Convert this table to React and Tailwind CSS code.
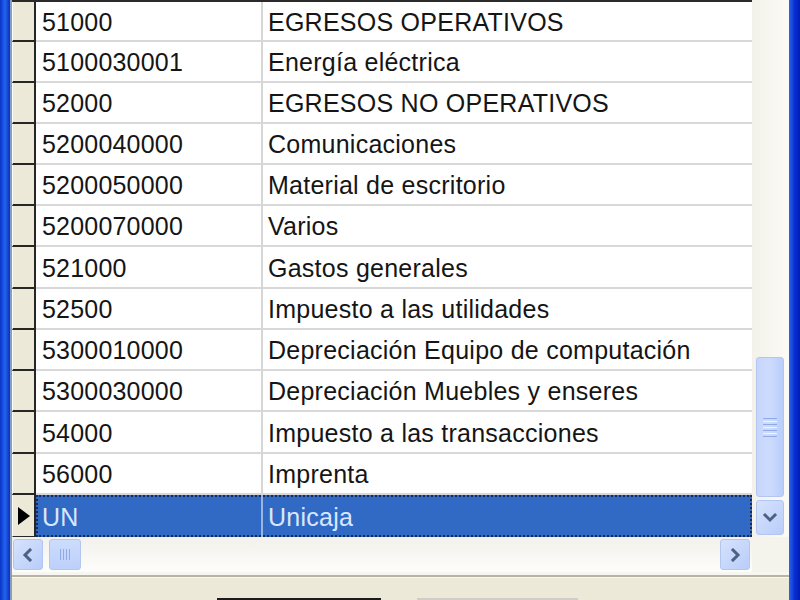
import React from "react";

const rows = [
  { code: "51000", name: "EGRESOS OPERATIVOS", h: "h-[40px]" },
  { code: "5100030001", name: "Energía eléctrica", h: "h-[41px]" },
  { code: "52000", name: "EGRESOS NO OPERATIVOS", h: "h-[41px]" },
  { code: "5200040000", name: "Comunicaciones", h: "h-[41px]" },
  { code: "5200050000", name: "Material de escritorio", h: "h-[41px]" },
  { code: "5200070000", name: "Varios", h: "h-[41px]" },
  { code: "521000", name: "Gastos generales", h: "h-[42px]" },
  { code: "52500", name: "Impuesto a las utilidades", h: "h-[41px]" },
  { code: "5300010000", name: "Depreciación Equipo de computación", h: "h-[41px]" },
  { code: "5300030000", name: "Depreciación Muebles y enseres", h: "h-[41px]" },
  { code: "54000", name: "Impuesto a las transacciones", h: "h-[42px]" },
  { code: "56000", name: "Imprenta", h: "h-[41px]" },
];

function Row({ code, name, h }) {
  return (
    <div className={`flex ${h}`}>
      <div className="w-[24px] bg-[#ece9d8] border-l border-l-white border-r-2 border-r-[#262626] border-b-2 border-b-[#262626]" />
      <div className="w-[227px] bg-white border-r-2 border-r-[#d6d6d6] border-b-2 border-b-[#d8d8d8] flex items-center pl-[6px] pt-[3px] text-[25px] tracking-[0.2px] text-[#151515]">
        {code}
      </div>
      <div className="flex-1 bg-white border-b-2 border-b-[#d8d8d8] flex items-center pl-[5px] pt-[3px] text-[25px] tracking-[0.25px] text-[#151515]">
        {name}
      </div>
    </div>
  );
}

function Chevron({ dir }) {
  const d =
    dir === "down"
      ? "M3 3 L8 8 L13 3"
      : dir === "left"
      ? "M9 2 L4 7 L9 12"
      : "M5 2 L10 7 L5 12";
  const vb = dir === "down" ? "0 0 16 11" : "0 0 14 14";
  const size = dir === "down" ? "w-[16px] h-[11px]" : "w-[14px] h-[14px]";
  return (
    <svg viewBox={vb} className={size}>
      <path d={d} fill="none" stroke="#4d6185" strokeWidth="3" strokeLinecap="square" />
    </svg>
  );
}

export default function App() {
  return (
    <div className="w-[800px] h-[600px] flex overflow-hidden bg-[#ece9d8] font-['Liberation_Sans',Arial,sans-serif]">
      {/* left window frame */}
      <div className="w-[10px] bg-gradient-to-r from-[#0a34c8] via-[#2563f0] to-[#0b2fb8]" />
      <div className="w-[2px] bg-[#8a9cc0]" />

      <div className="flex-1 flex flex-col">
        <div className="flex h-[537px]">
          {/* grid */}
          <div className="w-[740px] flex flex-col border-t-2 border-t-[#2a2a2a]">
            {rows.map((r) => (
              <Row key={r.code} {...r} />
            ))}
            {/* selected row */}
            <div className="flex h-[42px]">
              <div className="w-[24px] bg-[#ece9d8] border-l border-l-white border-r-2 border-r-[#262626] border-b border-b-[#262626] flex items-center justify-center">
                <svg viewBox="0 0 12 18" className="w-[12px] h-[18px]">
                  <path d="M0 0 L12 9 L0 18 Z" fill="#000" />
                </svg>
              </div>
              <div className="flex-1 flex bg-[#316ac5] outline-2 outline-dotted outline-[#1b2a55] -outline-offset-2">
                <div className="w-[227px] border-r-2 border-r-[#9bb5e3] flex items-center pl-[6px] pt-[3px] text-[25px] tracking-[0.2px] text-[#d9e6ff]">
                  UN
                </div>
                <div className="flex-1 flex items-center pl-[5px] pt-[3px] text-[25px] tracking-[0.25px] text-[#d9e6ff]">
                  Unicaja
                </div>
              </div>
            </div>
          </div>

          {/* vertical scrollbar */}
          <div className="flex-1 bg-gradient-to-r from-[#f3f1ea] to-[#fbfaf6] flex flex-col justify-end pl-[4px] pr-[5px] pb-[2px]">
            <div className="h-[140px] rounded-[3px] border border-[#b3c6f2] bg-gradient-to-r from-[#c6d6fc] via-[#cddcfd] to-[#b8cdfa] flex flex-col items-center justify-center gap-[2px]">
              <div className="w-[14px] h-[1px] bg-[#8fa9ec]" />
              <div className="w-[14px] h-[1px] bg-[#f0f4ff]" />
              <div className="w-[14px] h-[1px] bg-[#8fa9ec]" />
              <div className="w-[14px] h-[1px] bg-[#f0f4ff]" />
              <div className="w-[14px] h-[1px] bg-[#8fa9ec]" />
              <div className="w-[14px] h-[1px] bg-[#f0f4ff]" />
              <div className="w-[14px] h-[1px] bg-[#8fa9ec]" />
            </div>
            <div className="mt-[3px] h-[35px] rounded-[3px] border border-[#b3c6f2] bg-gradient-to-br from-[#d6e2fd] to-[#b9cdf9] flex items-center justify-center">
              <Chevron dir="down" />
            </div>
          </div>
        </div>

        {/* horizontal scrollbar */}
        <div className="flex h-[35px]">
          <div className="w-[740px] bg-gradient-to-b from-[#f2f1eb] to-[#fdfdfb] flex items-center pl-[1px]">
            <div className="w-[30px] h-[31px] rounded-[3px] border border-[#b3c6f2] bg-gradient-to-br from-[#d6e2fd] to-[#b9cdf9] flex items-center justify-center">
              <Chevron dir="left" />
            </div>
            <div className="ml-[6px] w-[32px] h-[31px] rounded-[3px] border border-[#b3c6f2] bg-gradient-to-b from-[#cddcfd] to-[#bdd0fa] flex items-center justify-center gap-[2px]">
              <div className="w-[1px] h-[11px] bg-[#8fa9ec]" />
              <div className="w-[1px] h-[11px] bg-[#8fa9ec]" />
              <div className="w-[1px] h-[11px] bg-[#8fa9ec]" />
              <div className="w-[1px] h-[11px] bg-[#8fa9ec]" />
            </div>
            <div className="flex-1" />
            <div className="mr-[2px] w-[30px] h-[31px] rounded-[3px] border border-[#b3c6f2] bg-gradient-to-br from-[#d6e2fd] to-[#b9cdf9] flex items-center justify-center">
              <Chevron dir="right" />
            </div>
          </div>
          <div className="flex-1 bg-[#f5f4ec]" />
        </div>

        <div className="h-[3px] bg-[#f7f6f1]" />
        <div className="h-[2px] bg-[#b8b4a4]" />

        {/* bottom panel */}
        <div className="flex-1 bg-[#ece9d8] border-t border-t-[#f8f7f2] flex items-end">
          <div className="ml-[205px] w-[164px] h-[2px] bg-[#1c1c1c]" />
          <div className="ml-[36px] w-[161px] h-[2px] bg-[#d0cec4]" />
        </div>
      </div>

      {/* right window frame */}
      <div className="w-[11px] bg-gradient-to-r from-[#2c64ea] via-[#0a2fd0] to-[#001db5]" />
    </div>
  );
}
